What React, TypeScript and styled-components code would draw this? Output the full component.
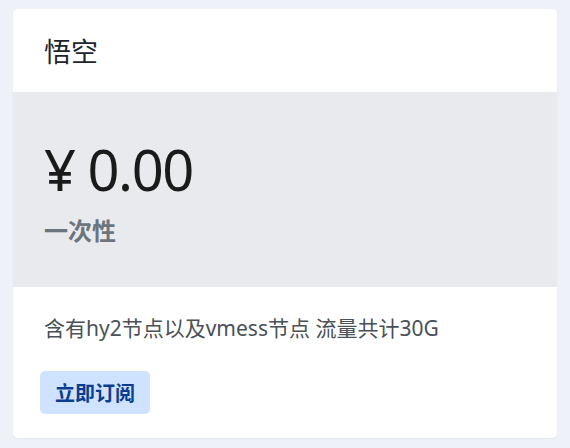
import React from "react";
import styled, { createGlobalStyle } from "styled-components";

const Global = createGlobalStyle`
  html, body { margin: 0; padding: 0; background: #eef1f7; }
  body { font-family: "Noto Sans", "Noto Sans CJK SC", sans-serif; }
`;

const Page = styled.div`
  padding: 9px 13px 10px 13px;
`;

const Card = styled.div`
  background: #ffffff;
  border-radius: 5px;
  overflow: hidden;
  box-shadow: 0 1px 2px rgba(0, 0, 0, 0.04);
`;

const Header = styled.div`
  height: 83px;
  display: flex;
  align-items: center;
  padding: 0 31px;
  font-size: 27px;
  color: #212529;
`;

const PriceBox = styled.div`
  background: #e9eaee;
  height: 195px;
  box-sizing: border-box;
  padding: 44px 31px 0 31px;
  display: flex;
  flex-direction: column;
`;

const Price = styled.div`
  font-size: 56px;
  line-height: 1.2;
  letter-spacing: -1.5px;
  color: #1a1a1a;
`;

const Period = styled.div`
  font-size: 24px;
  line-height: 1.5;
  font-weight: 700;
  color: #6c757d;
  margin-top: 10px;
`;

const Body = styled.div`
  padding: 26px 27px 24px 31px;
`;

const Desc = styled.div`
  font-size: 21px;
  color: #495057;
  line-height: 1.5;
`;

const Button = styled.button`
  display: block;
  margin-top: 26px;
  margin-left: -4px;
  background: #cfe2ff;
  color: #0a3d8f;
  border: none;
  border-radius: 5px;
  font-family: inherit;
  font-size: 20px;
  font-weight: 700;
  padding: 0 15px;
  height: 43px;
`;

export default function App() {
  return (
    <Page>
      <Global />
      <Card>
        <Header>悟空</Header>
        <PriceBox>
          <Price>¥ 0.00</Price>
          <Period>一次性</Period>
        </PriceBox>
        <Body>
          <Desc>含有hy2节点以及vmess节点 流量共计30G</Desc>
          <Button>立即订阅</Button>
        </Body>
      </Card>
    </Page>
  );
}
